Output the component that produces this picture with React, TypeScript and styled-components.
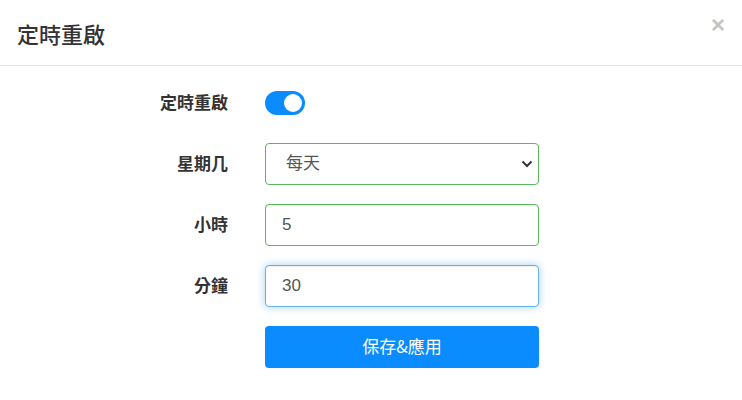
import styled, { createGlobalStyle } from "styled-components";

const GlobalStyle = createGlobalStyle`
  body {
    margin: 0;
    background: #fff;
    font-family: "Liberation Sans", "Noto Sans CJK TC", sans-serif;
    color: #333;
  }
`;

const Modal = styled.div`
  width: 742px;
  height: 400px;
  background: #fff;
`;

const Header = styled.div`
  display: flex;
  align-items: center;
  justify-content: space-between;
  height: 66px;
  padding: 0 17px;
  border-bottom: 1px solid #e5e5e5;
  box-sizing: border-box;
`;

const Title = styled.h4`
  margin: 0;
  font-size: 22px;
  font-weight: 500;
  color: #333;
  font-family: "Noto Sans CJK TC", sans-serif;
`;

const Close = styled.button`
  border: none;
  background: none;
  padding: 0;
  margin-top: -16px;
  margin-right: 0;
  font-size: 24px;
  font-weight: 700;
  line-height: 1;
  color: #c4c4c4;
  font-family: "Liberation Sans", sans-serif;
  cursor: pointer;
`;

const Form = styled.div`
  display: grid;
  grid-template-columns: 228px 274px;
  grid-auto-rows: 42px;
  column-gap: 37px;
  row-gap: 19px;
  padding-top: 16px;
`;

const Label = styled.label`
  display: flex;
  align-items: center;
  justify-content: flex-end;
  padding-bottom: 3px;
  font-size: 17px;
  font-weight: 700;
  color: #333;
  font-family: "Noto Sans CJK TC", sans-serif;
`;

const Cell = styled.div`
  display: flex;
  align-items: center;
`;

const Switch = styled.span<{ on: boolean }>`
  position: relative;
  display: inline-block;
  width: 40px;
  height: 24px;
  border-radius: 12px;
  background: ${(p) => (p.on ? "#0a8cff" : "#ccc")};
  &::after {
    content: "";
    position: absolute;
    top: 3px;
    left: ${(p) => (p.on ? "19px" : "3px")};
    width: 18px;
    height: 18px;
    border-radius: 50%;
    background: #fff;
  }
`;

const fieldBase = `
  width: 274px;
  height: 42px;
  box-sizing: border-box;
  border-radius: 4px;
  background: #fff;
  font-size: 17px;
  color: #555;
  font-family: "Liberation Sans", "Noto Sans CJK TC", sans-serif;
  outline: none;
`;

const Select = styled.select`
  ${fieldBase}
  appearance: none;
  border: 1px solid #5cb85c;
  padding: 0 30px 2px 20px;
  background-image: url("data:image/svg+xml,%3Csvg xmlns='http://www.w3.org/2000/svg' width='12' height='8' viewBox='0 0 12 8'%3E%3Cpath d='M1.5 1.5l4.5 4.5 4.5-4.5' fill='none' stroke='%23333' stroke-width='2'/%3E%3C/svg%3E");
  background-repeat: no-repeat;
  background-position: right 5px center;
`;

const Input = styled.input<{ focused?: boolean }>`
  ${fieldBase}
  padding: 0 16px;
  border: 1px solid ${(p) => (p.focused ? "#66afe9" : "#5cb85c")};
  box-shadow: ${(p) =>
    p.focused
      ? "inset 0 1px 1px rgba(0,0,0,.075), 0 0 8px rgba(102,175,233,.6)"
      : "inset 0 1px 1px rgba(0,0,0,.075)"};
`;

const SaveButton = styled.button`
  width: 274px;
  height: 42px;
  padding: 0 0 4px;
  border: none;
  border-radius: 4px;
  background: #0a8cff;
  color: #fff;
  font-size: 17px;
  font-family: "Noto Sans CJK TC", sans-serif;
  cursor: pointer;
`;

export default function App() {
  return (
    <Modal>
      <GlobalStyle />
      <Header>
        <Title>定時重啟</Title>
        <Close>×</Close>
      </Header>
      <Form>
        <Label>定時重啟</Label>
        <Cell>
          <Switch on />
        </Cell>
        <Label>星期几</Label>
        <Cell>
          <Select defaultValue="daily">
            <option value="daily">每天</option>
          </Select>
        </Cell>
        <Label>小時</Label>
        <Cell>
          <Input defaultValue="5" />
        </Cell>
        <Label>分鐘</Label>
        <Cell>
          <Input defaultValue="30" focused />
        </Cell>
        <span />
        <Cell>
          <SaveButton>保存&amp;應用</SaveButton>
        </Cell>
      </Form>
    </Modal>
  );
}
